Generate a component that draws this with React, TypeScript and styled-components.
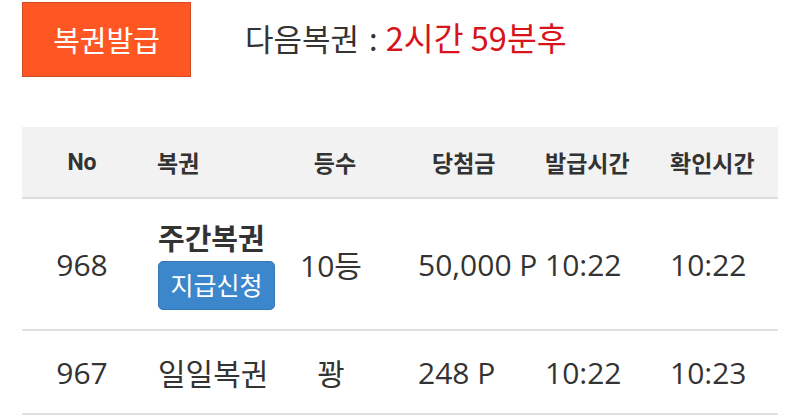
import React from "react";
import styled, { createGlobalStyle } from "styled-components";

const Global = createGlobalStyle`
  html, body { margin: 0; padding: 0; background: #fff; }
  body { font-family: "Open Sans", "Noto Sans CJK KR", sans-serif; color: #333; }
`;

const Page = styled.div`
  width: 800px;
  height: 418px;
  overflow: hidden;
  padding: 2px 22px 0 22px;
  box-sizing: border-box;
`;

const TopBar = styled.div`
  display: flex;
  align-items: center;
  gap: 54px;
  height: 75px;
`;

const IssueButton = styled.button`
  width: 169px;
  height: 75px;
  background: #ff5724;
  border: 1px solid #d24a22;
  color: #fff;
  font-family: "Noto Sans CJK KR", sans-serif;
  font-size: 29px;
  padding: 0 0 2px 0;
  box-sizing: border-box;
`;

const NextInfo = styled.div`
  font-family: "Noto Sans CJK KR", sans-serif;
  font-size: 31px;
  color: #333;
  margin-top: -6px;
  white-space: nowrap;
`;

const Colon = styled.span`
  margin: 0 8px 0 10px;
`;

const Red = styled.span`
  color: #d7141b;
  font-size: 32.5px;
`;

const Table = styled.div`
  margin-top: 50px;
  width: 756px;
  display: grid;
  grid-template-columns: 120px 148px 82px 163px 125px 118px;
`;

const HeadCell = styled.div<{ $align?: string; $pad?: number }>`
  height: 70px;
  background: #f2f2f2;
  border-bottom: 2px solid #dcdcdc;
  display: flex;
  align-items: center;
  justify-content: ${(p) => p.$align || "flex-start"};
  padding-left: ${(p) => p.$pad || 0}px;
  font-family: "Roboto", "Noto Sans CJK KR", sans-serif;
  font-weight: 700;
  font-size: 23px;
  color: #333;
  white-space: nowrap;
`;

const Cell = styled.div<{ $align?: string; $pad?: number; $h: number }>`
  height: ${(p) => p.$h}px;
  border-bottom: 2px solid #e0e0e0;
  display: flex;
  flex-direction: column;
  justify-content: center;
  align-items: ${(p) => p.$align || "flex-start"};
  padding-left: ${(p) => p.$pad || 0}px;
  font-size: 30px;
  color: #333;
  white-space: nowrap;
`;

const Title = styled.div`
  font-weight: 700;
  font-size: 29px;
  line-height: 32px;
  margin-top: 4px;
`;

const ClaimButton = styled.button`
  margin-top: 6px;
  width: 117px;
  height: 49px;
  background: #3c87cc;
  border: 1px solid #3577b6;
  border-radius: 5px;
  color: #fff;
  font-family: "Noto Sans CJK KR", sans-serif;
  font-size: 25px;
  padding: 0 0 2px 0;
`;

const cols = [
  { h: "center", hp: 0, b: "center", bp: 0 },
  { h: "flex-start", hp: 15, b: "flex-start", bp: 16 },
  { h: "center", hp: 8, b: "center", bp: 0 },
  { h: "flex-start", hp: 60, b: "flex-start", bp: 46 },
  { h: "flex-start", hp: 10, b: "flex-start", bp: 10 },
  { h: "flex-start", hp: 10, b: "flex-start", bp: 10 },
];

const headers = ["No", "복권", "등수", "당첨금", "발급시간", "확인시간"];

export default function App() {
  const rows: { h: number; cells: React.ReactNode[] }[] = [
    {
      h: 130,
      cells: [
        "968",
        <>
          <Title>주간복권</Title>
          <ClaimButton>지급신청</ClaimButton>
        </>,
        "10등",
        "50,000 P",
        "10:22",
        "10:22",
      ],
    },
    { h: 82, cells: ["967", "일일복권", "꽝", "248 P", "10:22", "10:23"] },
  ];
  return (
    <>
      <Global />
      <Page>
        <TopBar>
          <IssueButton>복권발급</IssueButton>
          <NextInfo>
            다음복권<Colon>:</Colon>
            <Red>2시간 59분후</Red>
          </NextInfo>
        </TopBar>
        <Table>
          {headers.map((t, i) => (
            <HeadCell key={t} $align={cols[i].h} $pad={cols[i].hp}>
              {t}
            </HeadCell>
          ))}
          {rows.map((r, ri) =>
            r.cells.map((c, i) => (
              <Cell key={`${ri}-${i}`} $h={r.h} $align={cols[i].b} $pad={cols[i].bp}>
                {c}
              </Cell>
            ))
          )}
        </Table>
      </Page>
    </>
  );
}
